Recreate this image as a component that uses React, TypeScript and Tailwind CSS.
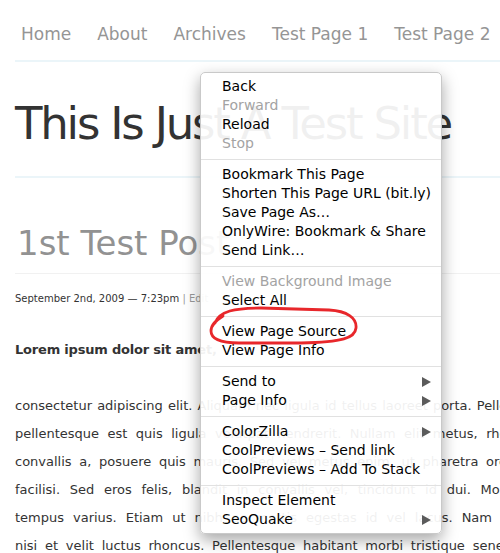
import React from 'react';

type MenuItem = { label: string; disabled?: boolean; submenu?: boolean } | 'sep';

const menu: MenuItem[] = [
  { label: 'Back' },
  { label: 'Forward', disabled: true },
  { label: 'Reload' },
  { label: 'Stop', disabled: true },
  'sep',
  { label: 'Bookmark This Page' },
  { label: 'Shorten This Page URL (bit.ly)' },
  { label: 'Save Page As…' },
  { label: 'OnlyWire: Bookmark & Share' },
  { label: 'Send Link…' },
  'sep',
  { label: 'View Background Image', disabled: true },
  { label: 'Select All' },
  'sep',
  { label: 'View Page Source' },
  { label: 'View Page Info' },
  'sep',
  { label: 'Send to', submenu: true },
  { label: 'Page Info', submenu: true },
  'sep',
  { label: 'ColorZilla', submenu: true },
  { label: 'CoolPreviews – Send link' },
  { label: 'CoolPreviews – Add To Stack' },
  'sep',
  { label: 'Inspect Element' },
  { label: 'SeoQuake', submenu: true },
];

const navLinks = ['Home', 'About', 'Archives', 'Test Page 1', 'Test Page 2'];

// each line is justified by hand, the column runs past the window edge
const bodyLines: { text: string; width: string }[] = [
  { text: 'consectetur adipiscing elit. Aliquam nec ligula id tellus laoreet porta. Pellentesque', width: 'w-[545px]' },
  { text: 'pellentesque est quis ligula volutpat hendrerit. Nullam elit metus, rhoncus', width: 'w-[523px]' },
  { text: 'convallis a, posuere quis mauris. Sed vel metus enim, ut pharetra orci.', width: 'w-[499px]' },
  { text: 'facilisi. Sed eros felis, blandit in convallis vel, tincidunt id dui. Morbi', width: 'w-[502px]' },
  { text: 'tempus varius. Etiam ut nibh ac mattis egestas id vel lacus. Nam at', width: 'w-[499px]' },
  { text: 'nisi et velit luctus rhoncus. Pellentesque habitant morbi tristique senectus', width: 'w-[516px]' },
];

function Arrow() {
  return (
    <svg width="9" height="10" viewBox="0 0 9 10" className="shrink-0">
      <path d="M0 0 L9 5 L0 10 Z" fill="#5b5b5b" />
    </svg>
  );
}

function ContextMenu() {
  return (
    <div className="absolute left-[200px] top-[72px] w-[242px] rounded-[5px] border border-[#c9c9c9] bg-white/[0.93] py-[4px] shadow-[0_6px_16px_rgba(0,0,0,0.35)]">
      {menu.map((item, i) =>
        item === 'sep' ? (
          <div key={i} className="flex h-[12px] items-center">
            <div className="h-px w-full bg-[#e1e1e1]" />
          </div>
        ) : (
          <div
            key={i}
            className={`flex h-[19px] items-center justify-between pl-[21px] pr-[10px] text-[14px] leading-[19px] ${
              item.disabled ? 'text-[#a3a3a3]' : 'text-black'
            }`}
          >
            <span>{item.label}</span>
            {item.submenu && <Arrow />}
          </div>
        )
      )}

      {/* hand-drawn ring around View Page Source */}
      <svg
        className="pointer-events-none absolute left-0 top-[228px]"
        width="170"
        height="48"
        viewBox="0 0 170 48"
      >
        <path
          d="M14 22 C18 10 34 7 60 7 L128 9 C146 10 156 17 155 27 C154 37 142 41 100 42 L38 42 C18 42 10 37 10 30 C10 24 14 20 22 15"
          fill="none"
          stroke="#e8272b"
          strokeWidth="2.8"
          strokeLinecap="round"
        />
      </svg>
    </div>
  );
}

export default function App() {
  return (
    <div
      className="relative h-[553px] w-[500px] overflow-hidden bg-white text-[#333]"
      style={{ fontFamily: '"Lucida Grande", "DejaVu Sans", sans-serif' }}
    >
      <nav className="ml-[15px] flex gap-[26px] border-b-2 border-[#ebf5f9] pb-[14px] pl-[6px] pt-[22px] text-[17px] leading-[24px] text-[#959595] whitespace-nowrap">
        {navLinks.map(link => (
          <span key={link}>{link}</span>
        ))}
      </nav>

      <div className="ml-[15px] w-[560px]">
        <h1 className="border-b-2 border-[#ebf5f9] pb-[24px] pt-[34px] text-[45px] leading-[56px] tracking-[-2.2px] whitespace-nowrap">
          This Is Just A Test Site
        </h1>

        <h2 className="mt-[45px] border-b border-[#f1f1f1] pb-[10px] pl-[2px] text-[34px] leading-[40px] text-[#929292] whitespace-nowrap">
          1st Test Post
        </h2>

        <div className="mt-[17px] text-[10px] leading-[16px] whitespace-nowrap">
          September 2nd, 2009 — 7:23pm <span className="text-[#999]">| Edit</span>
        </div>

        <p className="mt-[33px] text-[13px] font-bold leading-[20px] tracking-[-0.2px] whitespace-nowrap">
          Lorem ipsum dolor sit amet,
        </p>

        <div className="mt-[32px] text-[13px] leading-[28px]">
          {bodyLines.map((line, i) => (
            <div key={i} className={`flex justify-between whitespace-nowrap ${line.width}`}>
              {line.text.split(' ').map((w, j) => (
                <span key={j}>{w}</span>
              ))}
            </div>
          ))}
        </div>
      </div>

      <ContextMenu />
    </div>
  );
}
